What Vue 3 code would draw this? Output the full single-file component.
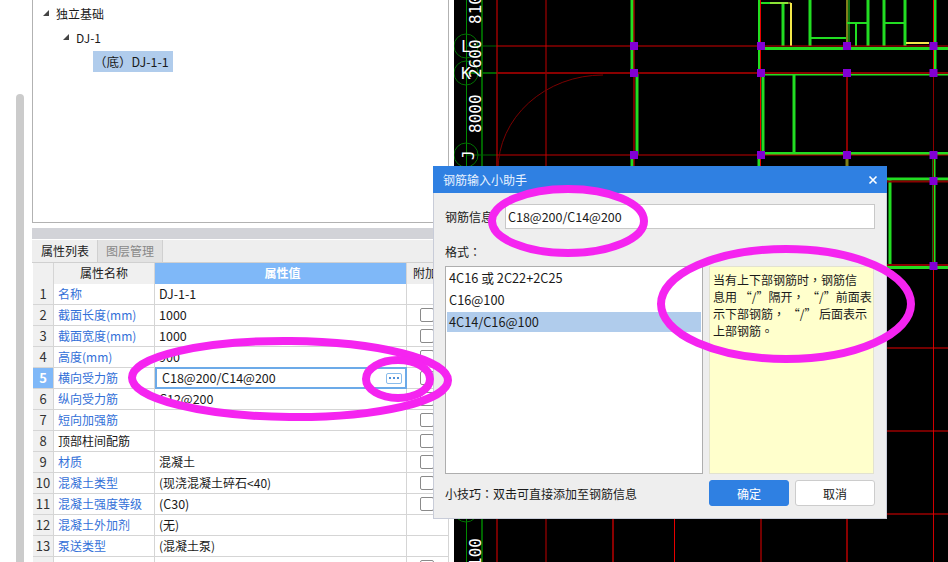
<script setup>
const rows = [
  { no: 1, name: '名称', value: 'DJ-1-1', blue: true },
  { no: 2, name: '截面长度(mm)', value: '1000', blue: true, check: true },
  { no: 3, name: '截面宽度(mm)', value: '1000', blue: true, check: true },
  { no: 4, name: '高度(mm)', value: '900', blue: true, check: true },
  { no: 5, name: '横向受力筋', value: 'C18@200/C14@200', blue: true, check: true, active: true },
  { no: 6, name: '纵向受力筋', value: 'C12@200', blue: true, check: true },
  { no: 7, name: '短向加强筋', value: '', blue: true, check: true },
  { no: 8, name: '顶部柱间配筋', value: '', check: true },
  { no: 9, name: '材质', value: '混凝土', blue: true, check: true, cjk: true },
  { no: 10, name: '混凝土类型', value: '(现浇混凝土碎石<40)', blue: true, check: true, cjk: true },
  { no: 11, name: '混凝土强度等级', value: '(C30)', blue: true, check: true },
  { no: 12, name: '混凝土外加剂', value: '(无)', blue: true, cjk: true },
  { no: 13, name: '泵送类型', value: '(混凝土泵)', blue: true, cjk: true },
  { no: '', name: '', value: '', check: true }
]

const formats = ['4C16 或 2C22+2C25', 'C16@100', '4C14/C16@100']

const noteLines = [
  '当有上下部钢筋时，钢筋信',
  '息用 “/”隔开， “/”前面表',
  '示下部钢筋， “/” 后面表示',
  '上部钢筋。'
]

// canvas lines: x1 y1 x2 y2 colour width
const RED = '#e60000'
const DARK = '#8a0000'
const GREEN = '#22dd22'
const AXIS = '#006400'
const BROWN = '#7f7f1a'
const YELLOW = '#f4e84a'

const lines = [
  [466.5, 0, 466.5, 562, '#008a00', 1],
  [482, 0, 482, 562, AXIS, 2],
  [466, 46, 497, 46, AXIS, 1],
  [466, 73, 497, 73, AXIS, 2],
  [466, 155, 497, 155, AXIS, 1],
  // walls
  [632, 0, 632, 73, GREEN, 3],
  [637, 73, 637, 155, GREEN, 3],
  [632, 155, 632, 170, GREEN, 3],
  [759, 0, 759, 73, GREEN, 2],
  [763, 73, 763, 155, GREEN, 3],
  [759, 155, 759, 170, GREEN, 3],
  [794, 75, 794, 155, GREEN, 3],
  [760, 3, 788, 3, GREEN, 2],
  [783, 3, 783, 46, GREEN, 3],
  [810, 0, 810, 46, GREEN, 3],
  [810, 38, 847, 38, GREEN, 2],
  [847, 0, 847, 46, BROWN, 2],
  [849, 0, 849, 46, GREEN, 1],
  [847, 23, 868, 23, GREEN, 2],
  [856, 23, 856, 46, GREEN, 2],
  [868, 0, 868, 46, GREEN, 3],
  [884, 0, 884, 46, GREEN, 3],
  [905, 0, 905, 46, GREEN, 3],
  [884, 23, 905, 23, GREEN, 2],
  [935, 0, 935, 73, GREEN, 3],
  [763, 48.5, 948, 48.5, GREEN, 3],
  [763, 74.5, 948, 74.5, GREEN, 2],
  [763, 153.5, 948, 153.5, GREEN, 3],
  [890, 179, 890, 267, GREEN, 3],
  [887, 179, 948, 179, GREEN, 3],
  [887, 267.5, 948, 267.5, GREEN, 3],
  [934, 155, 934, 266, GREEN, 3],
  [847, 155, 847, 170, BROWN, 3],
  // yellow pieces
  [770, 3, 791, 3, YELLOW, 1],
  [791, 3, 791, 46, YELLOW, 2],
  [906, 43, 929, 43, YELLOW, 2],
  // grid
  [497, 0, 497, 170, RED, 1],
  [546, 0, 546, 170, '#c00000', 1],
  [634, 0, 634, 170, RED, 1],
  [760.5, 0, 760.5, 170, RED, 1],
  [847, 73, 847, 155, DARK, 2],
  [933.5, 0, 933.5, 73, RED, 1],
  [933.5, 73, 933.5, 266, DARK, 1],
  [933.5, 266, 933.5, 562, '#d00000', 1],
  [497, 46, 948, 46, '#d00000', 1],
  [497, 73, 948, 73, DARK, 2],
  [497, 155, 948, 155, '#c00000', 1],
  [887, 181.5, 948, 181.5, DARK, 2],
  [887, 265, 948, 265, DARK, 2],
  [887, 348, 948, 348, RED, 1],
  [887, 431, 948, 431, RED, 1],
  [887, 514, 948, 514, RED, 1],
  [497, 515, 497, 562, RED, 1],
  [546, 515, 546, 562, '#c00000', 1],
  [613, 515, 613, 562, DARK, 2],
  [674.5, 515, 674.5, 562, RED, 1],
  [761, 515, 761, 562, RED, 1],
  [847, 515, 847, 562, DARK, 2]
]

const columnXs = [634, 761, 847, 933.5]
const pins = []
for (const y of [46, 73, 155]) {
  for (const x of columnXs) pins.push([x, y])
}
pins.push([933.5, 181], [933.5, 266])

const axisCircles = [46, 73, 155, 510]
</script>

<template>
  <div class="screen">
    <div class="side">
      <div class="scroll-track"></div>
      <div class="panel">
        <div class="tree">
          <div class="node lvl0">
            <svg class="caret" width="6" height="6" viewBox="0 0 6 6"><polygon points="6,0 6,6 0,6" fill="#444" /></svg>
            <span>独立基础</span>
          </div>
          <div class="node lvl1">
            <svg class="caret" width="6" height="6" viewBox="0 0 6 6"><polygon points="6,0 6,6 0,6" fill="#444" /></svg>
            <span>DJ-1</span>
          </div>
          <div class="node lvl2"><span class="picked">（底）DJ-1-1</span></div>
        </div>

        <div class="splitter"></div>

        <div class="tabs">
          <div class="tab on">属性列表</div>
          <div class="tab">图层管理</div>
        </div>

        <div class="table">
          <div class="row head">
            <div class="c-no"></div>
            <div class="c-name">属性名称</div>
            <div class="c-value">属性值</div>
            <div class="c-add">附加</div>
          </div>
          <div v-for="r in rows" :key="r.no" class="row" :class="{ active: r.active }">
            <div class="c-no">{{ r.no }}</div>
            <div class="c-name" :class="{ blue: r.blue }">{{ r.name }}</div>
            <div class="c-value" :class="{ cjk: r.cjk }">
              <template v-if="r.active">
                <span>{{ r.value }}</span>
                <span class="more"><i></i><i></i><i></i></span>
              </template>
              <template v-else>{{ r.value }}</template>
            </div>
            <div class="c-add"><span v-if="r.check" class="check"></span></div>
          </div>
        </div>
      </div>
    </div>

    <div class="cad">
      <svg width="494" height="562" viewBox="454 0 494 562">
        <line v-for="(l, i) in lines" :key="i" :x1="l[0]" :y1="l[1]" :x2="l[2]" :y2="l[3]" :stroke="l[4]" :stroke-width="l[5]" />
        <path d="M498 170 A105 95 0 0 1 603 75" fill="none" stroke="#7a0000" />
        <rect v-for="(p, i) in pins" :key="'p' + i" :x="p[0] - 4" :y="p[1] - 4" width="8" height="8" fill="#8200d4" />
        <circle v-for="y in axisCircles" :key="y" cx="466" :cy="y" r="12" fill="none" stroke="#007000" />
        <g class="cad-text">
          <text transform="translate(481 24) rotate(-90)">810</text>
          <text transform="translate(481 78) rotate(-90)">2600</text>
          <text transform="translate(481 133) rotate(-90)">8000</text>
          <text transform="translate(481 567) rotate(-90)">100</text>
          <text x="461" y="52">L</text>
          <text x="461" y="79">K</text>
          <text transform="translate(474 160) rotate(-90)">J</text>
        </g>
      </svg>
    </div>

    <div class="dialog">
      <div class="title">
        <span>钢筋输入小助手</span>
        <svg width="10" height="10" viewBox="0 0 10 10"><path d="M1.5 1.5 L8.5 8.5 M8.5 1.5 L1.5 8.5" stroke="#fff" stroke-width="1.6" /></svg>
      </div>
      <div class="body">
        <div class="info">
          <label>钢筋信息</label>
          <div class="info-input">C18@200/C14@200</div>
        </div>
        <div class="format-label">格式：</div>
        <div class="format">
          <div class="list">
            <div v-for="(f, i) in formats" :key="f" class="item" :class="{ picked: i === 2 }">{{ f }}</div>
          </div>
          <div class="note">
            <div v-for="line in noteLines" :key="line">{{ line }}</div>
          </div>
        </div>
        <div class="foot">
          <span class="tip">小技巧：双击可直接添加至钢筋信息</span>
          <div class="btns">
            <button class="btn primary">确定</button>
            <button class="btn">取消</button>
          </div>
        </div>
      </div>
    </div>

    <svg class="marks" width="948" height="562" viewBox="0 0 948 562">
      <ellipse cx="290" cy="379" rx="158" ry="38" transform="rotate(0.5 290 379)" />
      <ellipse cx="398" cy="379" rx="32" ry="19" />
      <ellipse cx="568" cy="221" rx="76" ry="32" />
      <ellipse cx="786" cy="304" rx="125" ry="55" />
    </svg>
  </div>
</template>

<style>
html, body {
  margin: 0;
  background: #fff;
}
</style>

<style scoped>
.screen {
  position: relative;
  display: flex;
  width: 948px;
  height: 562px;
  overflow: hidden;
  font-family: "Noto Sans CJK SC", sans-serif;
  font-size: 12px;
  color: #1a1a1a;
  background: #fff;
}

.side {
  display: flex;
  width: 454px;
  flex: none;
}

.scroll-track {
  width: 8px;
  margin: 94px 8px 0 16px;
  background: #cbcbcb;
  border-radius: 4px 4px 0 0;
}

.panel {
  width: 417px;
  display: flex;
  flex-direction: column;
}

.tree {
  flex: none;
  height: 223px;
  box-sizing: border-box;
  border: 1px solid #b2b2b2;
  border-top: 0;
  padding-top: 1px;
}

.node {
  display: flex;
  align-items: center;
  height: 24px;
  font-size: 12px;
}

.caret {
  margin-right: 7px;
}

.lvl0 { padding-left: 10px; }
.lvl1 { padding-left: 30px; }
.lvl2 { padding-left: 60px; }

.picked {
  background: #b0ccec;
}

.node .picked {
  height: 21px;
  line-height: 21px;
  padding: 0 4px 0 1px;
  font-family: "Noto Sans CJK TC", sans-serif;
  font-size: 12.5px;
}

.splitter {
  flex: none;
  height: 11px;
  margin: 5px 0 1px;
  background: #d2d3d8;
}

.tabs {
  flex: none;
  display: flex;
  height: 23px;
  background: #eeeeee;
  border-bottom: 1px solid #d0d0d0;
  box-sizing: border-box;
  padding-left: 1px;
}

.tab {
  width: 64px;
  line-height: 22px;
  text-align: center;
  color: #888;
  background: #e2e2e2;
  border-right: 1px solid #d0d0d0;
}

.tab.on {
  color: #222;
  background: #eeeeee;
}

.table {
  flex: none;
  width: 415px;
  margin-left: 1px;
  border-right: 1px solid #d5d5d5;
}

.row {
  display: flex;
  height: 21px;
  box-sizing: border-box;
  border-bottom: 1px solid #d5d5d5;
  line-height: 20px;
}

.row > div {
  box-sizing: border-box;
  border-right: 1px solid #d5d5d5;
  white-space: nowrap;
}

.c-no {
  width: 21px;
  text-align: center;
  background: #f0f0f0;
  color: #333;
  font-size: 13px;
}

.c-name {
  width: 101px;
  padding-left: 4px;
}

.c-name.blue {
  color: #3370d8;
}

.c-value {
  width: 252px;
  padding-left: 4px;
  font-size: 12.5px;
}

.c-value.cjk {
  font-size: 12px;
}

.c-add {
  flex: 1;
  position: relative;
  padding-left: 6px;
  overflow: hidden;
}

.row > .c-add {
  border-right: 0;
}

.check {
  position: absolute;
  left: 13px;
  top: 3px;
  width: 14px;
  height: 14px;
  box-sizing: border-box;
  border: 1px solid #8a8a8a;
  border-radius: 2px;
  background: #fff;
}

.head {
  height: 21px;
  border-bottom: 0;
}

.head .c-no,
.head .c-name {
  background: #f0f0f0;
  text-align: center;
  padding: 0;
  font-size: 12px;
}

.head .c-value {
  background: #7fb8f8;
  color: #fff;
  font-size: 12px;
  font-weight: 700;
  text-align: center;
}

.head .c-add {
  background: #eeeeee;
}

.active .c-no {
  background: #7fb8f8;
  color: #fff;
  font-weight: 700;
}

.active .c-value {
  display: flex;
  align-items: center;
  justify-content: space-between;
  height: 22px;
  margin-top: -1px;
  border: 2px solid #6caae8;
  padding: 0 3px 0 5px;
}

.more {
  display: flex;
  align-items: center;
  justify-content: center;
  gap: 2px;
  width: 16px;
  height: 11px;
  border: 1px solid #8abcec;
  border-radius: 2px;
  box-sizing: border-box;
}

.more i {
  width: 2px;
  height: 2px;
  background: #4f8fd8;
}

.cad {
  flex: 1;
  background: #000;
}

.cad svg {
  display: block;
}

.cad-text {
  font-family: "DejaVu Sans Mono", monospace;
  font-size: 16px;
  fill: #fff;
}

.dialog {
  position: absolute;
  left: 433px;
  top: 166px;
  width: 454px;
  height: 353px;
  display: flex;
  flex-direction: column;
  background: #eeeeee;
  border: 1px solid #c8ccd8;
  border-top: 0;
  box-sizing: border-box;
}

.title {
  display: flex;
  align-items: center;
  justify-content: space-between;
  height: 27px;
  flex: none;
  margin: 0 -1px;
  padding: 0 9px 0 10px;
  background: #2f80e2;
  color: #e8f2ff;
}

.body {
  flex: 1;
  padding: 11px;
  display: flex;
  flex-direction: column;
}

.info {
  display: flex;
  align-items: center;
}

.info label {
  width: 60px;
}

.info-input {
  flex: 1;
  height: 25px;
  line-height: 23px;
  box-sizing: border-box;
  padding-left: 2px;
  border: 1px solid #c8c8c8;
  background: #fff;
  font-size: 12.5px;
}

.format-label {
  margin-top: 14px;
  height: 18px;
  line-height: 18px;
  font-family: "Noto Sans CJK TC", sans-serif;
}

.format {
  display: flex;
  gap: 6px;
  margin-top: 5px;
  height: 208px;
}

.list {
  width: 258px;
  box-sizing: border-box;
  padding: 1px;
  border: 1px solid #aeaeae;
  background: #fff;
}

.item {
  height: 20px;
  margin-bottom: 2px;
  line-height: 20px;
  padding-left: 2px;
  font-size: 12.75px;
}

.note {
  width: 165px;
  box-sizing: border-box;
  padding: 4px 3px;
  background: #ffffcc;
  border: 1px solid #e2e2d0;
  line-height: 17px;
  white-space: nowrap;
  font-family: "Noto Sans CJK TC", sans-serif;
}

.foot {
  display: flex;
  align-items: center;
  justify-content: space-between;
  margin-top: 6px;
}

.tip {
  font-family: "Noto Sans CJK TC", sans-serif;
}

.btns {
  display: flex;
  gap: 6px;
}

.btn {
  width: 80px;
  height: 26px;
  padding: 0;
  border: 1px solid #cccccc;
  border-radius: 3px;
  background: #fff;
  font: inherit;
  color: #1a1a1a;
}

.btn.primary {
  background: #2f80e2;
  border-color: #2f80e2;
  color: #fff;
}

.marks {
  position: absolute;
  left: 0;
  top: 0;
  pointer-events: none;
}

.marks ellipse {
  fill: none;
  stroke: #f524f0;
  stroke-width: 8;
}
</style>
